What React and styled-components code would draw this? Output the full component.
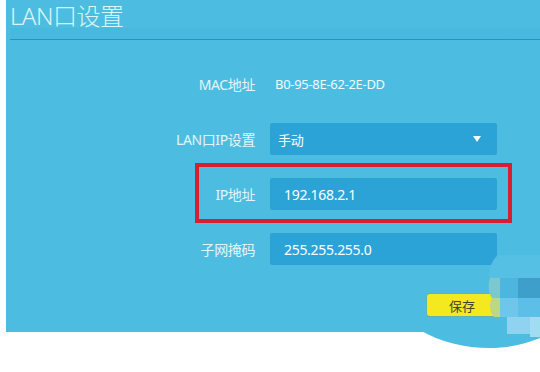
import React from 'react';
import styled, { createGlobalStyle } from 'styled-components';

const GlobalStyle = createGlobalStyle`
  html, body {
    margin: 0;
    padding: 0;
    background: #ffffff;
  }
  body {
    font-family: "Noto Sans", "Noto Sans CJK SC", sans-serif;
  }
`;

const COLORS = {
  panel: '#4cbde1',
  field: '#2ba3d7',
  rule: '#2593c6',
  label: '#e4f4fa',
  red: '#d81f2f',
  yellow: '#f4e81f',
};

const fields = [
  { label: '子网掩码', value: '255.255.255.0' },
];

// mosaic tiles of the blurred watermark, in overlay coordinates
const tiles = [
  { x: 88, y: 5, w: 20, h: 23, c: '#55bfe4' },
  { x: 108, y: 5, w: 22, h: 23, c: '#55bfe4' },
  { x: 90, y: 28, w: 18, h: 20, c: '#4db6e0' },
  { x: 108, y: 28, w: 22, h: 20, c: '#3f9fcb' },
  { x: 90, y: 48, w: 18, h: 19, c: '#6ec6ea' },
  { x: 108, y: 48, w: 22, h: 19, c: '#5bbfe8' },
  { x: 97, y: 67, w: 23, h: 17, c: '#8fd3f0' },
  { x: 120, y: 67, w: 10, h: 20, c: '#a2dcf3' },
];

function App() {
  return (
    <Page>
      <GlobalStyle />
      <Panel>
        <Header>
          <Title>LAN口设置</Title>
        </Header>
        <Form>
          <Row>
            <Label>MAC地址</Label>
            <StaticValue>B0-95-8E-62-2E-DD</StaticValue>
          </Row>
          <Row>
            <Label>LAN口IP设置</Label>
            <Select>
              <span>手动</span>
              <Caret />
            </Select>
          </Row>
          <Row $highlight>
            <Label>IP地址</Label>
            <Field>192.168.2.1</Field>
          </Row>
          {fields.map((f) => (
            <Row key={f.label}>
              <Label>{f.label}</Label>
              <Field>{f.value}</Field>
            </Row>
          ))}
          <Row>
            <Label />
            <Actions>
              <SaveButton>保存</SaveButton>
            </Actions>
          </Row>
        </Form>
      </Panel>
      <Mosaic width="130" height="100" viewBox="0 0 130 100">
        <path
          d="M0 79 L10 80 C30 92 55 98 80 98 C100 98 115 94 130 88 L130 70 L0 70 Z"
          fill={COLORS.panel}
        />
        <path
          d="M88 5 L130 5 L130 30 L80 30 C78 22 80 12 88 5 Z"
          fill="#55bfe4"
        />
        <path d="M80 28 L90 28 L90 48 L82 48 C78 42 78 34 80 28 Z" fill="#7cc8cf" />
        <path d="M82 48 L90 48 L90 67 L84 67 C79 61 79 54 82 48 Z" fill="#bcd884" />
        {tiles.map((t, i) => (
          <rect key={i} x={t.x} y={t.y} width={t.w} height={t.h} fill={t.c} />
        ))}
      </Mosaic>
    </Page>
  );
}

const Page = styled.div`
  position: relative;
  width: 540px;
  height: 372px;
  overflow: hidden;
  background: #ffffff;
`;

const Panel = styled.div`
  margin-left: 6px;
  width: 534px;
  height: 332px;
  background: ${COLORS.panel};
  display: flex;
  flex-direction: column;
`;

const Header = styled.div`
  height: 40px;
  margin-left: 4px;
  border-bottom: 1px solid ${COLORS.rule};
  box-sizing: border-box;
  display: flex;
  align-items: flex-start;
  background: linear-gradient(
    to bottom,
    transparent 0,
    transparent 28px,
    rgba(40, 150, 200, 0.1) 28px
  );
`;

const Title = styled.h1`
  margin: 1px 0 0;
  font-size: 24px;
  line-height: 30px;
  font-weight: 300;
  color: #dcf5f8;
  letter-spacing: -0.5px;
`;

const Form = styled.div`
  display: flex;
  flex-direction: column;
  gap: 23px;
  margin-top: 28px;
  padding-left: 144px;
`;

const Row = styled.div`
  position: relative;
  display: flex;
  align-items: center;
  gap: 15px;
  height: 32px;

  ${(p) =>
    p.$highlight &&
    `
    &::after {
      content: '';
      position: absolute;
      top: -15px;
      bottom: -13px;
      left: 45px;
      right: 28px;
      border: 4px solid ${COLORS.red};
      pointer-events: none;
    }
  `}
`;

const Label = styled.span`
  width: 105px;
  text-align: right;
  font-size: 14px;
  color: ${COLORS.label};
  white-space: nowrap;
  letter-spacing: -0.4px;
`;

const StaticValue = styled.span`
  padding-left: 5px;
  font-size: 13px;
  color: #f2fafd;
  letter-spacing: -0.3px;
`;

const Field = styled.div`
  width: 227px;
  height: 32px;
  box-sizing: border-box;
  padding-left: 14px;
  display: flex;
  align-items: center;
  background: ${COLORS.field};
  border-radius: 2px;
  font-size: 14px;
  color: #ffffff;
  letter-spacing: -0.3px;
`;

const Select = styled(Field)`
  padding-left: 8px;
  padding-right: 16px;
  justify-content: space-between;
  font-size: 13px;
`;

const Caret = styled.span`
  width: 0;
  height: 0;
  border-left: 4px solid transparent;
  border-right: 4px solid transparent;
  border-top: 6px solid #ffffff;
`;

const Actions = styled.div`
  width: 227px;
  display: flex;
  justify-content: flex-end;
`;

const SaveButton = styled.button`
  width: 70px;
  height: 22px;
  border: none;
  border-radius: 3px;
  background: ${COLORS.yellow};
  box-shadow: 0 0 0 1px rgba(150, 150, 60, 0.25);
  font-family: inherit;
  font-size: 13px;
  color: #444433;
  padding: 0;
  margin-top: 2px;
`;

const Mosaic = styled.svg`
  position: absolute;
  left: 410px;
  top: 250px;
  display: block;
`;

export default App;
